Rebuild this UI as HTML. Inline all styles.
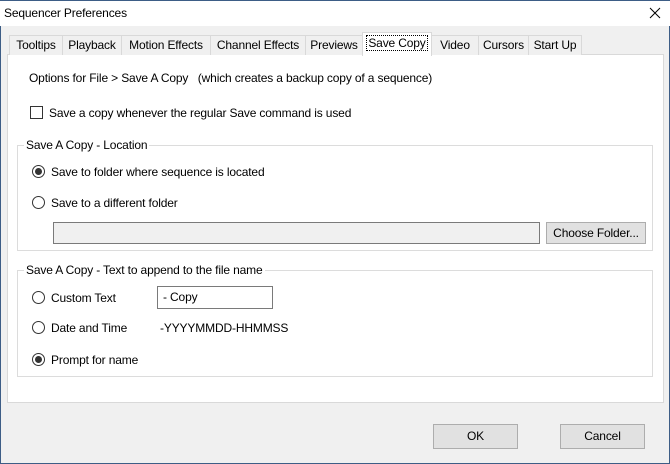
<!DOCTYPE html>
<html><head><style>
*{box-sizing:border-box;margin:0;padding:0}
body{width:670px;height:464px;overflow:hidden;font-family:"Liberation Sans",sans-serif;font-size:12px;color:#000;background:#f0f0f0;position:relative;letter-spacing:-0.15px}
.win{position:absolute;left:0;top:0;width:670px;height:464px;border:1px solid #3d5d86;border-top:none;background:#f0f0f0}
.title{position:absolute;left:0;top:0;width:670px;height:26px;background:#fff;border-top:1px solid #3d5d86}
.abs{position:absolute;white-space:nowrap;line-height:14px}
.tab{position:absolute;top:35px;height:20px;border:1px solid #d9d9d9;border-bottom:none;background:#f0f0f0;text-align:center;line-height:18px;font-size:12px}
.panel{position:absolute;left:7px;top:54px;width:657px;height:349px;background:#fff;border:1px solid #d9d9d9}
.grp{position:absolute;border:1px solid #dcdcdc}
.gt{position:absolute;background:#fff;padding:0 2px;line-height:14px}
.radio{position:absolute;width:13px;height:13px;border:1px solid #333;border-radius:50%;background:#fff}
.radio.on::after{content:"";position:absolute;left:2px;top:2px;width:7px;height:7px;border-radius:50%;background:#333}
.btn{position:absolute;background:#e1e1e1;border:1px solid #adadad;text-align:center}
</style></head><body>
<div class="win"></div>
<div class="title"></div>
<div class="abs" style="left:4px;top:6px">Sequencer Preferences</div>
<svg class="abs" style="left:649px;top:7px" width="12" height="12"><path d="M1 1L11 11M11 1L1 11" stroke="#000" stroke-width="1"/></svg>
<div class="panel"></div>
<div class="tab" style="left:9px;width:54px">Tooltips</div>
<div class="tab" style="left:62px;width:60px">Playback</div>
<div class="tab" style="left:121px;width:90px">Motion Effects</div>
<div class="tab" style="left:210px;width:96px">Channel Effects</div>
<div class="tab" style="left:305px;width:58px">Previews</div>
<div class="tab" style="left:431px;width:48px">Video</div>
<div class="tab" style="left:478px;width:51px">Cursors</div>
<div class="tab" style="left:528px;width:54px">Start Up</div>
<div class="tab" style="left:362px;top:32px;width:70px;height:24px;background:#fff;line-height:20px"><span style="border:1px dotted #000;padding:0 1px">Save Copy</span></div>
<div class="abs" style="left:29px;top:71px">Options for File &gt; Save A Copy &nbsp; (which creates a backup copy of a sequence)</div>
<div class="abs" style="left:30px;top:106px;width:13px;height:13px;border:1px solid #333;background:#fff"></div>
<div class="abs" style="left:49px;top:106px">Save a copy whenever the regular Save command is used</div>
<div class="grp" style="left:17px;top:145px;width:636px;height:106px"></div>
<div class="gt" style="left:24px;top:138px">Save A Copy - Location</div>
<div class="radio on" style="left:32px;top:165px"></div>
<div class="abs" style="left:51px;top:165px">Save to folder where sequence is located</div>
<div class="radio" style="left:32px;top:196px"></div>
<div class="abs" style="left:51px;top:196px">Save to a different folder</div>
<div class="abs" style="left:53px;top:222px;width:487px;height:22px;background:#f0f0f0;border:1px solid #7a7a7a"></div>
<div class="btn" style="left:546px;top:222px;width:100px;height:22px;line-height:20px">Choose Folder...</div>
<div class="grp" style="left:17px;top:270px;width:636px;height:107px"></div>
<div class="gt" style="left:24px;top:263px">Save A Copy - Text to append to the file name</div>
<div class="radio" style="left:32px;top:291px"></div>
<div class="abs" style="left:51px;top:291px">Custom Text</div>
<div class="abs" style="left:157px;top:286px;width:116px;height:23px;border:1px solid #7a7a7a;background:#fff;padding-left:5px;line-height:20px">- Copy</div>
<div class="radio" style="left:32px;top:321px"></div>
<div class="abs" style="left:51px;top:321px">Date and Time</div>
<div class="abs" style="left:160px;top:321px">-YYYYMMDD-HHMMSS</div>
<div class="radio on" style="left:32px;top:353px"></div>
<div class="abs" style="left:51px;top:353px">Prompt for name</div>
<div class="btn" style="left:433px;top:424px;width:85px;height:25px;line-height:23px">OK</div>
<div class="btn" style="left:560px;top:424px;width:85px;height:25px;line-height:23px">Cancel</div>
</body></html>
